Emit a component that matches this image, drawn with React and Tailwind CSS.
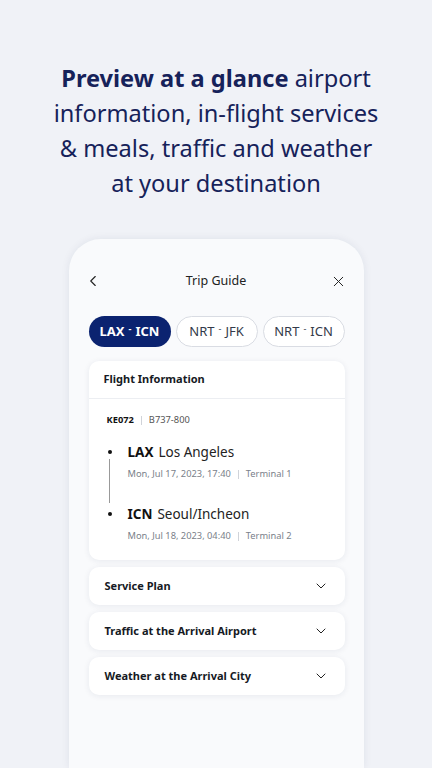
import { ChevronLeft, ChevronDown, X } from "lucide-react";

const Route = ({ from, to, active }) => (
  <div
    className={
      active
        ? "h-[31px] rounded-full bg-[#0b2370] text-white font-bold flex items-center justify-center text-[13px]"
        : "h-[31px] rounded-full bg-white border border-[#d9dce3] text-[#333a4a] flex items-center justify-center text-[13px]"
    }
  >
    <span>{from}</span>
    <span className="text-[9px] mx-[4px] -mt-[6px]">-</span>
    <span>{to}</span>
  </div>
);

const Stop = ({ code, city, date, terminal }) => (
  <div className="flex">
    <div className="w-[21px] flex justify-start pl-[1px] pt-[8px]">
      <div className="w-[4px] h-[4px] rounded-full bg-[#111]" />
    </div>
    <div>
      <div className="flex items-baseline gap-[5px] leading-[20px]">
        <span className="text-[13.5px] font-bold text-[#111]">{code}</span>
        <span className="text-[13.5px] text-[#222]">{city}</span>
      </div>
      <div className="flex items-center text-[9.3px] text-[#7a7f8a] mt-[5px] leading-[14px]">
        <span>{date}</span>
        <span className="mx-[7px] w-px h-[9px] bg-[#d0d3d9]" />
        <span>{terminal}</span>
      </div>
    </div>
  </div>
);

const Section = ({ title }) => (
  <div className="h-[38px] rounded-[10px] bg-white shadow-[0_1px_6px_rgba(30,40,80,0.08)] flex items-center justify-between pl-[16px] pr-[16px]">
    <span className="text-[11px] font-bold text-[#161a24]">{title}</span>
    <ChevronDown size={16} strokeWidth={1.5} className="text-[#222]" />
  </div>
);

export default function App() {
  return (
    <div
      className="w-[432px] h-[768px] overflow-hidden bg-[#f0f2f7] flex flex-col items-center"
      style={{ fontFamily: '"Noto Sans", "Open Sans", sans-serif' }}
    >
      <h1 className="pt-[61px] text-center text-[23.6px] leading-[35px] text-[#16225a]">
        <span className="font-bold">Preview at a glance</span> airport
        <br />
        information, in-flight services
        <br />
        &amp; meals, traffic and weather
        <br />
        at your destination
      </h1>

      <div className="mt-[38px] w-[295px] flex-1 bg-[#f9fafc] rounded-t-[32px] shadow-[0_0_8px_rgba(30,40,80,0.08)] px-[20px] pr-[19px] pt-[22px]">
        <div className="h-[40px] flex items-center justify-between text-[#222]">
          <ChevronLeft size={18} strokeWidth={1.5} className="-ml-[5px]" />
          <span className="text-[12.5px] text-[#222]">Trip Guide</span>
          <X size={17} strokeWidth={1.4} className="-mr-[3px]" />
        </div>

        <div className="mt-[15px] grid grid-cols-3 gap-[5px]">
          <Route from="LAX" to="ICN" active />
          <Route from="NRT" to="JFK" />
          <Route from="NRT" to="ICN" />
        </div>

        <div className="mt-[14px] rounded-[10px] bg-white shadow-[0_1px_6px_rgba(30,40,80,0.08)] pb-[17px]">
          <div className="h-[38px] flex items-center px-[15px] border-b border-[#eceef2]">
            <span className="text-[11px] font-bold text-[#161a24]">Flight Information</span>
          </div>
          <div className="pl-[18px] pt-[14px]">
            <div className="flex items-center text-[9.3px] leading-[14px]">
              <span className="font-bold text-[#111]">KE072</span>
              <span className="mx-[7px] w-px h-[9px] bg-[#d0d3d9]" />
              <span className="text-[#555]">B737-800</span>
            </div>
            <div className="relative mt-[15px]">
              <div className="absolute left-[2px] top-[17px] w-px h-[44px] bg-[#999]" />
              <Stop code="LAX" city="Los Angeles" date="Mon, Jul 17, 2023, 17:40" terminal="Terminal 1" />
              <div className="h-[23px]" />
              <Stop code="ICN" city="Seoul/Incheon" date="Mon, Jul 18, 2023, 04:40" terminal="Terminal 2" />
            </div>
          </div>
        </div>

        <div className="mt-[7px] flex flex-col gap-[7px]">
          <Section title="Service Plan" />
          <Section title="Traffic at the Arrival Airport" />
          <Section title="Weather at the Arrival City" />
        </div>
      </div>
    </div>
  );
}
